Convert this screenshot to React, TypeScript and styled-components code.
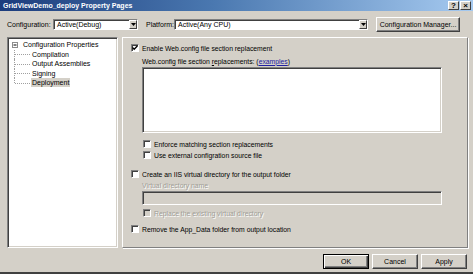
import React from "react";
import { styled, createGlobalStyle } from "styled-components";

const GlobalStyle = createGlobalStyle`
  html, body {
    margin: 0;
    padding: 0;
    width: 473px;
    height: 274px;
    overflow: hidden;
    background: #d4d0c8;
  }
  * {
    box-sizing: border-box;
  }
`;

const treeItems = ["Compilation", "Output Assemblies", "Signing", "Deployment"];

function CheckBox({ checked, disabled }: { checked?: boolean; disabled?: boolean }) {
  return (
    <Box disabled={disabled}>
      {checked && (
        <svg width="6" height="6" viewBox="0 0 6 6">
          <path d="M0.5 2.5 L2.2 4.2 L5.5 0.8" stroke="#000" strokeWidth="1.3" fill="none" />
        </svg>
      )}
    </Box>
  );
}

function Combo({ value, width }: { value: string; width: number }) {
  return (
    <ComboBox style={{ width }}>
      <ComboText>{value}</ComboText>
      <DropButton>
        <svg width="5" height="3" viewBox="0 0 5 3">
          <path d="M0 0 L5 0 L2.5 3 Z" fill="#000" />
        </svg>
      </DropButton>
    </ComboBox>
  );
}

export default function App() {
  return (
    <>
      <GlobalStyle />
      <Window>
        <TitleBar>
          <TitleText>GridViewDemo_deploy Property Pages</TitleText>
          <CaptionButtons>
            <CaptionButton>?</CaptionButton>
            <CaptionButton>×</CaptionButton>
          </CaptionButtons>
        </TitleBar>

        <TopRow>
          <Label>Configuration:</Label>
          <Combo value="Active(Debug)" width={85} />
          <Label spaced>Platform:</Label>
          <Combo value="Active(Any CPU)" width={194} />
          <PushButton wide>Configuration Manager...</PushButton>
        </TopRow>

        <Body>
          <Tree>
            <TreeRow>
              <Expander>
                <svg width="4" height="4" viewBox="0 0 4 4">
                  <path d="M0.5 2 H3.5" stroke="#000" strokeWidth="1" />
                </svg>
              </Expander>
              <TreeText>Configuration Properties</TreeText>
            </TreeRow>
            {treeItems.map((item, i) => (
              <TreeRow key={item} child>
                <Branch last={i === treeItems.length - 1} />
                <TreeText selected={item === "Deployment"}>{item}</TreeText>
              </TreeRow>
            ))}
          </Tree>

          <Panel>
            <CheckRow>
              <CheckBox checked />
              <Text>Enable Web.config file section replacement</Text>
            </CheckRow>
            <TextRow indent mt={3}>
              <Text>
                Web.config file section <u>r</u>eplacements: (<Link>examples</Link>)
              </Text>
            </TextRow>
            <TextArea />
            <CheckRow indent mt={6}>
              <CheckBox />
              <Text>Enforce matching section replacements</Text>
            </CheckRow>
            <CheckRow indent mt={1}>
              <CheckBox />
              <Text>Use external configration source file</Text>
            </CheckRow>
            <CheckRow mt={9}>
              <CheckBox />
              <Text>Create an IIS virtual directory for the output folder</Text>
            </CheckRow>
            <TextRow indent mt={1}>
              <Text disabled>Virtual directory name</Text>
            </TextRow>
            <DisabledInput />
            <CheckRow indent mt={3}>
              <CheckBox disabled />
              <Text disabled>Replace the existing virtual directory</Text>
            </CheckRow>
            <CheckRow mt={6}>
              <CheckBox />
              <Text>Remove the App_Data folder from output location</Text>
            </CheckRow>
          </Panel>
        </Body>

        <Footer>
          <PushButton isDefault>OK</PushButton>
          <PushButton>Cancel</PushButton>
          <PushButton>Apply</PushButton>
        </Footer>
      </Window>
    </>
  );
}

const Window = styled.div`
  width: 473px;
  height: 274px;
  display: flex;
  flex-direction: column;
  background: #d4d0c8;
  border-bottom: 2px solid #404040;
  font-family: "Liberation Sans", Arial, sans-serif;
  font-size: 7px;
  color: #000;
`;

const TitleBar = styled.div`
  height: 11px;
  display: flex;
  align-items: center;
  justify-content: space-between;
  padding: 0 2px 0 3px;
  background: linear-gradient(to right, #1c3c7c 0%, #4a78b0 45%, #a6caf0 100%);
`;

const TitleText = styled.div`
  color: #fff;
  font-weight: bold;
  font-size: 7px;
`;

const CaptionButtons = styled.div`
  display: flex;
  gap: 1px;
`;

const CaptionButton = styled.div`
  width: 11px;
  height: 9px;
  display: flex;
  align-items: center;
  justify-content: center;
  background: #d4d0c8;
  border: 1px solid;
  border-color: #fff #404040 #404040 #fff;
  font-size: 8px;
  font-weight: bold;
  line-height: 1;
`;

const TopRow = styled.div`
  height: 26px;
  display: flex;
  align-items: center;
  padding: 1px 5px 0 7px;
`;

const Label = styled.div<{ spaced?: boolean }>`
  width: ${({ spaced }) => (spaced ? "auto" : "46px")};
  margin: ${({ spaced }) => (spaced ? "0 0 0 8px" : "0")};
  white-space: nowrap;
`;

const ComboBox = styled.div`
  height: 11px;
  display: flex;
  align-items: center;
  background: #fff;
  border: 1px solid;
  border-color: #808080 #fff #fff #808080;
  box-shadow: inset 1px 1px 0 #404040;
  & + div {
    margin-left: 8px;
  }
`;

const ComboText = styled.div`
  flex: 1;
  padding-left: 3px;
  white-space: nowrap;
`;

const DropButton = styled.div`
  width: 8px;
  height: 9px;
  display: flex;
  align-items: center;
  justify-content: center;
  background: #d4d0c8;
  border: 1px solid;
  border-color: #fff #404040 #404040 #fff;
`;

const PushButton = styled.div<{ wide?: boolean; isDefault?: boolean }>`
  width: ${({ wide }) => (wide ? "84px" : "46px")};
  height: 15px;
  margin-left: ${({ wide }) => (wide ? "auto" : "0")};
  display: flex;
  align-items: center;
  justify-content: center;
  background: #d4d0c8;
  border: 1px solid;
  border-color: ${({ isDefault }) => (isDefault ? "#000" : "#fff #404040 #404040 #fff")};
  box-shadow: ${({ isDefault }) =>
    isDefault
      ? "inset 1px 1px 0 #fff, inset -1px -1px 0 #404040, inset -2px -2px 0 #808080"
      : "inset -1px -1px 0 #808080"};
  white-space: nowrap;
`;

const Body = styled.div`
  height: 211px;
  display: flex;
  padding-left: 7px;
  padding-right: 5px;
  gap: 4px;
`;

const Tree = styled.div`
  width: 111px;
  background: #fff;
  border: 1px solid;
  border-color: #808080 #fff #fff #808080;
  box-shadow: inset 1px 1px 0 #404040, inset -1px -1px 0 #d4d0c8;
  padding: 2px 0 0 4px;
`;

const TreeRow = styled.div<{ child?: boolean }>`
  height: 9.5px;
  display: flex;
  align-items: center;
  padding-left: ${({ child }) => (child ? "2px" : "0")};
`;

const Expander = styled.div`
  width: 6px;
  height: 6px;
  display: flex;
  align-items: center;
  justify-content: center;
  border: 1px solid #8c8c8c;
  background: #fff;
  margin-right: 4px;
`;

const Branch = styled.div<{ last?: boolean }>`
  align-self: flex-start;
  width: 16px;
  height: ${({ last }) => (last ? "5px" : "9.5px")};
  position: relative;
  border-left: 1px dotted #a0a0a0;
  margin-right: 1px;
  &::after {
    content: "";
    position: absolute;
    left: 0;
    top: 4.5px;
    width: 15px;
    border-top: 1px dotted #a0a0a0;
  }
`;

const TreeText = styled.div<{ selected?: boolean }>`
  white-space: nowrap;
  padding: 0 1px;
  line-height: 9px;
  background: ${({ selected }) => (selected ? "#d4d0c8" : "transparent")};
`;

const Panel = styled.div`
  flex: 1;
  display: flex;
  flex-direction: column;
  border: 1px solid;
  border-color: #fff #808080 #808080 #fff;
  box-shadow: 1px 1px 0 #fff;
  padding: 5px 0 0 8px;
  font-size: 6.8px;
`;

const CheckRow = styled.div<{ indent?: boolean; mt?: number }>`
  height: 10px;
  display: flex;
  align-items: center;
  gap: 3px;
  margin-left: ${({ indent }) => (indent ? "12px" : "0")};
  margin-top: ${({ mt }) => mt ?? 0}px;
`;

const TextRow = styled.div<{ indent?: boolean; mt?: number }>`
  height: 10px;
  display: flex;
  align-items: center;
  margin-left: ${({ indent }) => (indent ? "11px" : "0")};
  margin-top: ${({ mt }) => mt ?? 0}px;
`;

const Box = styled.div<{ disabled?: boolean }>`
  width: 8px;
  height: 8px;
  flex-shrink: 0;
  display: flex;
  align-items: center;
  justify-content: center;
  background: ${({ disabled }) => (disabled ? "#d4d0c8" : "#fff")};
  border: 1px solid;
  border-color: #808080 #fff #fff #808080;
  box-shadow: inset 1px 1px 0 #404040;
`;

const Text = styled.span<{ disabled?: boolean }>`
  white-space: nowrap;
  color: ${({ disabled }) => (disabled ? "#a09d96" : "#000")};
  text-shadow: ${({ disabled }) => (disabled ? "1px 1px 0 #fff" : "none")};
`;

const Link = styled.span`
  color: #2020a0;
  text-decoration: underline;
`;

const TextArea = styled.div`
  width: 300px;
  height: 66px;
  margin: 1px 0 0 11px;
  background: #fff;
  border: 1px solid;
  border-color: #808080 #fff #fff #808080;
  box-shadow: inset 1px 1px 0 #404040, inset -1px -1px 0 #d4d0c8;
`;

const DisabledInput = styled.div`
  width: 300px;
  height: 14px;
  margin: 1px 0 0 11px;
  background: #d4d0c8;
  border: 1px solid;
  border-color: #808080 #fff #fff #808080;
  box-shadow: inset 1px 1px 0 #404040;
`;

const Footer = styled.div`
  flex: 1;
  display: flex;
  align-items: center;
  justify-content: flex-end;
  gap: 3px;
  padding: 2px 6px 0 0;
`;
